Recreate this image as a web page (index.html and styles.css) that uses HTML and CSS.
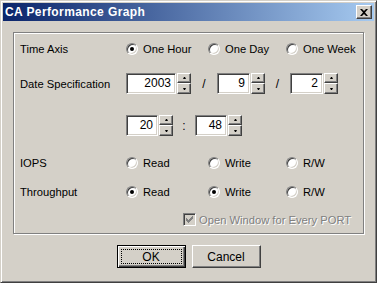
FILE: index.html
```html
<!DOCTYPE html>
<html lang="en">
<head>
  <meta charset="UTF-8">
  <title>CA Performance Graph</title>
  <link rel="stylesheet" href="styles.css">
</head>
<body>

  <div class="window">
    <!-- title bar -->
    <div class="titlebar">
      <span class="title">CA Performance Graph</span>
      <span class="close">
        <svg width="8" height="7" viewBox="0 0 8 7"><path d="M0 0h2l2 2 2-2h2L5 3.5 8 7H6L4 5 2 7H0l3-3.5z" fill="#000"/></svg>
      </span>
    </div>

    <div class="group">
      <!-- time axis -->
      <div class="row r1">
        <span class="label">Time Axis</span>
        <span class="opt a"><span class="dot on"></span>One Hour</span>
        <span class="opt b"><span class="dot"></span>One Day</span>
        <span class="opt"><span class="dot"></span>One Week</span>
      </div>

      <!-- date -->
      <div class="row r2">
        <span class="label">Date Specification</span>
        <span class="spin"><span class="edit w50">2003</span><span class="arrows"><span class="up"></span><span class="down"></span></span></span>
        <span class="sep s26">/</span>
        <span class="spin"><span class="edit w33">9</span><span class="arrows"><span class="up"></span><span class="down"></span></span></span>
        <span class="sep s25">/</span>
        <span class="spin"><span class="edit w33">2</span><span class="arrows"><span class="up"></span><span class="down"></span></span></span>
      </div>

      <!-- time -->
      <div class="row r3">
        <span class="label"></span>
        <span class="spin"><span class="edit w32">20</span><span class="arrows"><span class="up"></span><span class="down"></span></span></span>
        <span class="sep s22">:</span>
        <span class="spin"><span class="edit w32">48</span><span class="arrows"><span class="up"></span><span class="down"></span></span></span>
      </div>

      <!-- IOPS -->
      <div class="row r4">
        <span class="label">IOPS</span>
        <span class="opt a"><span class="dot"></span>Read</span>
        <span class="opt b"><span class="dot"></span>Write</span>
        <span class="opt"><span class="dot"></span>R/W</span>
      </div>

      <!-- throughput -->
      <div class="row r5">
        <span class="label">Throughput</span>
        <span class="opt a"><span class="dot on"></span>Read</span>
        <span class="opt b"><span class="dot on"></span>Write</span>
        <span class="opt"><span class="dot"></span>R/W</span>
      </div>

      <div class="row r6">
        <span class="check">
          <svg width="7" height="7" viewBox="0 0 7 7"><path d="M6 0h1v3H6v1H5v1H4v1H3v1H2V6H1V5H0V2h1v1h1v1h1V3h1V2h1V1h1z" fill="#808080"/></svg>
        </span>
        <span class="disabled">Open Window for Every PORT</span>
      </div>
    </div>

    <div class="buttons">
      <span class="btn default">OK</span>
      <span class="btn">Cancel</span>
    </div>
  </div>

</body>
</html>
```

FILE: styles.css
```css
body {
  margin: 0;
  font-family: "Liberation Sans", Arial, sans-serif;
  font-size: 11.2px;
  color: #000;
}
.window {
  width: 377px;
  height: 283px;
  box-sizing: border-box;
  background-color: #d4d0c8;
  border: 1px solid;
  border-color: #d4d0c8 #404040 #404040 #d4d0c8;
  box-shadow: inset 1px 1px #fff, inset -1px -1px #808080;
  padding: 2px;
  display: flex;
  flex-direction: column;
}
.titlebar {
  height: 18px;
  display: flex;
  align-items: center;
  justify-content: space-between;
  padding: 0 2px;
  background: linear-gradient(to right, #0a246a, #a6caf0);
}
.title {
  color: #fff;
  font-weight: bold;
  font-size: 12px;
  letter-spacing: 0.4px;
}
.close {
  width: 16px;
  height: 14px;
  box-sizing: border-box;
  background-color: #d4d0c8;
  border: 1px solid;
  border-color: #fff #404040 #404040 #fff;
  box-shadow: inset -1px -1px #808080;
  display: flex;
  align-items: center;
  justify-content: center;
}
.group {
  width: 351px;
  height: 202px;
  box-sizing: border-box;
  margin: 11px 0 0 10px;
  padding: 5px 0 0 6px;
  border: 1px solid #808080;
  box-shadow: inset 1px 1px #fff, 1px 1px #fff;
}
.row {
  display: flex;
  align-items: center;
  height: 21px;
}
.r2 { margin-top: 14px; }
.r3 { margin-top: 21px; }
.r4 { margin-top: 16px; }
.r5 { margin-top: 8px; }
.r6 { margin-top: 7px; padding-left: 163px; }
.label {
  width: 106px;
}
.opt {
  display: flex;
  align-items: center;
}
.opt.a { width: 82px; }
.opt.b { width: 78px; }
.dot {
  width: 12px;
  height: 12px;
  box-sizing: border-box;
  margin-right: 5px;
  border-radius: 50%;
  background-color: #fff;
  border: 1px solid;
  border-color: #808080 #fff #fff #808080;
  box-shadow: inset 1px 1px #404040, inset -1px -1px #d4d0c8;
  display: flex;
  align-items: center;
  justify-content: center;
}
.dot.on::after {
  content: "";
  width: 4px;
  height: 4px;
  border-radius: 50%;
  background-color: #000;
}
.spin {
  display: flex;
  gap: 1px;
  height: 21px;
}
.edit {
  height: 21px;
  box-sizing: border-box;
  background-color: #fff;
  border: 1px solid;
  border-color: #808080 #fff #fff #808080;
  box-shadow: inset 1px 1px #404040, inset -1px -1px #d4d0c8;
  text-align: right;
  padding-right: 4px;
  line-height: 19px;
  font-size: 12px;
}
.w50 { width: 50px; }
.w33 { width: 33px; }
.w32 { width: 32px; }
.arrows {
  width: 14px;
  display: flex;
  flex-direction: column;
}
.arrows span {
  box-sizing: border-box;
  background-color: #d4d0c8;
  border: 1px solid;
  border-color: #fff #404040 #404040 #fff;
  box-shadow: inset -1px -1px #808080;
  display: flex;
  align-items: center;
  justify-content: center;
}
.arrows .up { height: 10px; }
.arrows .down { height: 11px; }
.up::after,
.down::after {
  content: "";
  width: 1px;
  border-left: 1px solid transparent;
  border-right: 1px solid transparent;
}
.up::after { border-bottom: 2px solid #000; }
.down::after { border-top: 2px solid #000; }
.sep { text-align: center; font-size: 12px; }
.s26 { width: 26px; }
.s25 { width: 25px; }
.s22 { width: 22px; }
.check {
  width: 13px;
  height: 13px;
  box-sizing: border-box;
  margin-right: 3px;
  background-color: #d4d0c8;
  border: 1px solid;
  border-color: #808080 #fff #fff #808080;
  box-shadow: inset 1px 1px #404040, inset -1px -1px #d4d0c8;
  display: flex;
  align-items: center;
  justify-content: center;
}
.disabled {
  color: #808080;
  text-shadow: 1px 1px #fff;
}
.buttons {
  display: flex;
  justify-content: center;
  gap: 6px;
  margin-top: 11px;
}
.btn {
  width: 69px;
  height: 23px;
  box-sizing: border-box;
  font-size: 12px;
  border: 1px solid;
  border-color: #fff #404040 #404040 #fff;
  box-shadow: inset -1px -1px #808080;
  display: flex;
  align-items: center;
  justify-content: center;
}
.btn.default {
  border-color: #000;
  box-shadow: inset 1px 1px #fff, inset -1px -1px #404040, inset -2px -2px #808080;
  outline: 1px dotted #000;
  outline-offset: -5px;
}
```
